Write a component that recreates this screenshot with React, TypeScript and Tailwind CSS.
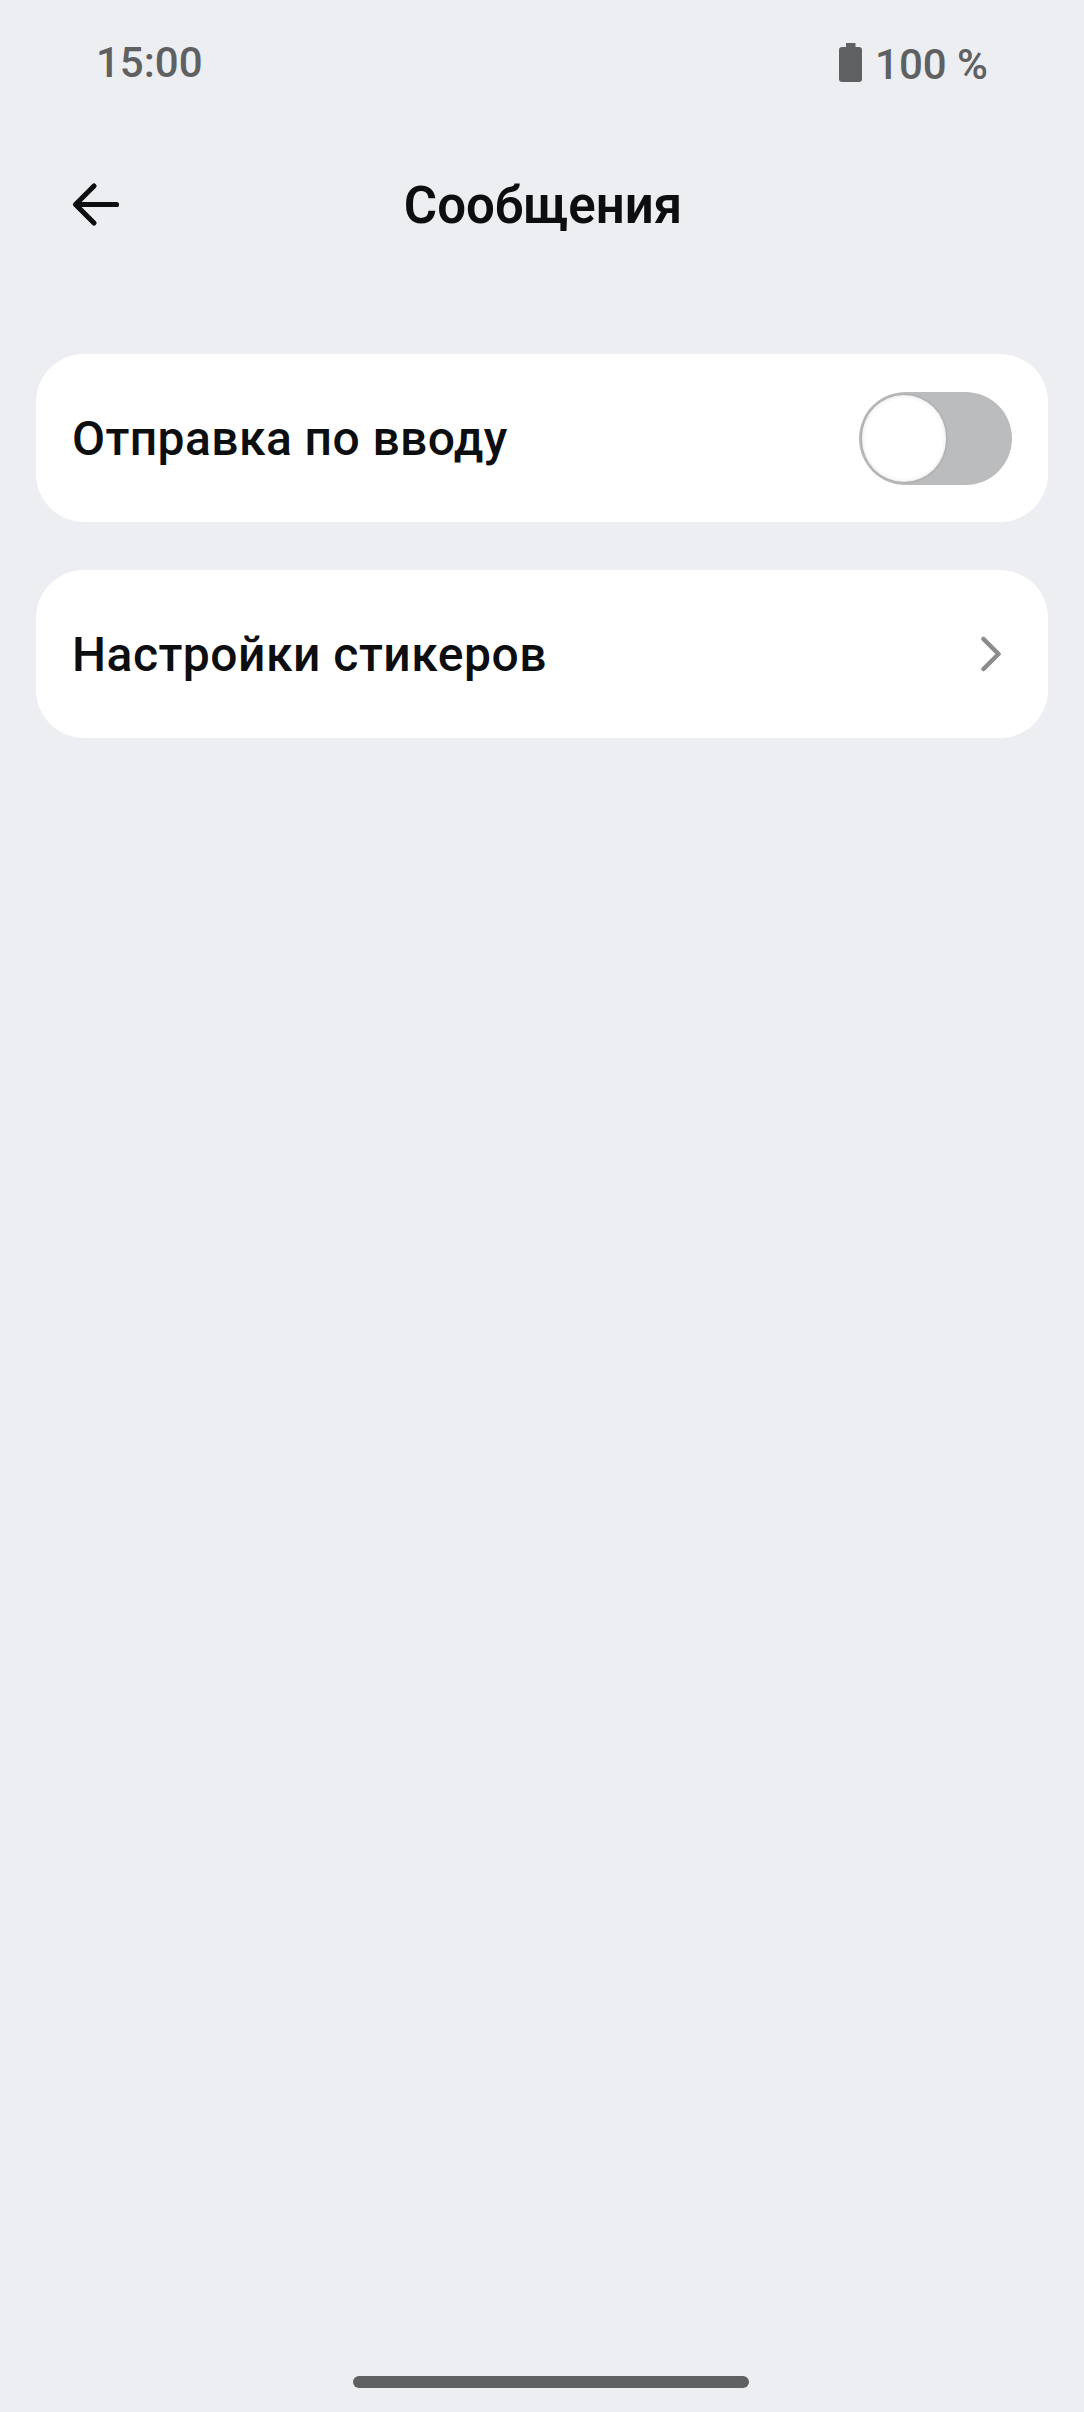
import { useState } from 'react';

function StatusBar() {
  return (
    <div className="flex h-[127px] items-start justify-between pl-[96px] pr-[96px] text-[42px] font-medium leading-[50px] text-[#5f6061]">
      <span className="mt-[38px]">15:00</span>
      <div className="mt-[40px] flex items-start">
        <svg className="mr-[13px] mt-[3px] h-[39px] w-[23px]" viewBox="0 0 23 39" fill="currentColor">
          <path d="M7 0h9.5v4H20a3 3 0 0 1 3 3v29a3 3 0 0 1-3 3H3a3 3 0 0 1-3-3V7a3 3 0 0 1 3-3h4z" />
        </svg>
        <span>100 %</span>
      </div>
    </div>
  );
}

function Header() {
  return (
    <header className="grid h-[155px] grid-cols-[202px_1fr_200px] items-center">
      <button className="pl-[70px]" aria-label="Назад">
        <svg className="h-[46px] w-[52px]" viewBox="0 0 52 46" fill="none" stroke="#0d0e10" strokeWidth="5.2" strokeLinecap="round" strokeLinejoin="round">
          <path d="M24 4 5.500 22.500 24 41M6 22.500h40.500" />
        </svg>
      </button>
      <h1 className="whitespace-nowrap pt-0.5 text-center text-[51px] font-semibold leading-[60px]">Сообщения</h1>
    </header>
  );
}

export default function App() {
  const [sendOnEnter, setSendOnEnter] = useState(false);

  return (
    <div className="flex h-[2412px] w-[1084px] flex-col bg-[#edeef2] font-['Roboto',sans-serif] text-[#0d0e10]">
      <StatusBar />
      <Header />

      {/* Settings cards */}
      <main className="mt-[72px] flex flex-1 flex-col gap-12 px-9 text-[48px] font-medium leading-[56px]">
        <div className="flex h-[168px] items-center justify-between rounded-[48px] bg-white px-9">
          <span className="pt-0.5 tracking-[0.42px]">Отправка по вводу</span>
          <button
            role="switch"
            aria-checked={sendOnEnter}
            onClick={() => setSendOnEnter(!sendOnEnter)}
            className={`flex h-[93px] w-[153px] items-center rounded-full p-[3px] ${
              sendOnEnter ? 'justify-end bg-blue-500' : 'justify-start bg-[#bbbcbd]'
            }`}
          >
            <span className="h-[87px] w-[84px] rounded-full bg-white shadow-[0_0_3px_rgba(0,0,0,0.2),inset_0_0_5px_rgba(0,0,0,0.12)]" />
          </button>
        </div>

        <button className="flex h-[168px] items-center justify-between rounded-[48px] bg-white pl-9 pr-[46px]">
          <span className="pt-0.5 tracking-[0.5px]">Настройки стикеров</span>
          <svg className="h-[36px] w-[22px]" viewBox="0 0 22 36" fill="none" stroke="#8a8b8c" strokeWidth="4.5" strokeLinecap="round" strokeLinejoin="round">
            <path d="m3.500 3 15 15-15 15" />
          </svg>
        </button>
      </main>

      {/* Gesture bar */}
      <div className="mb-6 ml-[353px] h-3 w-[396px] rounded-full bg-[#5f6061]" />
    </div>
  );
}
